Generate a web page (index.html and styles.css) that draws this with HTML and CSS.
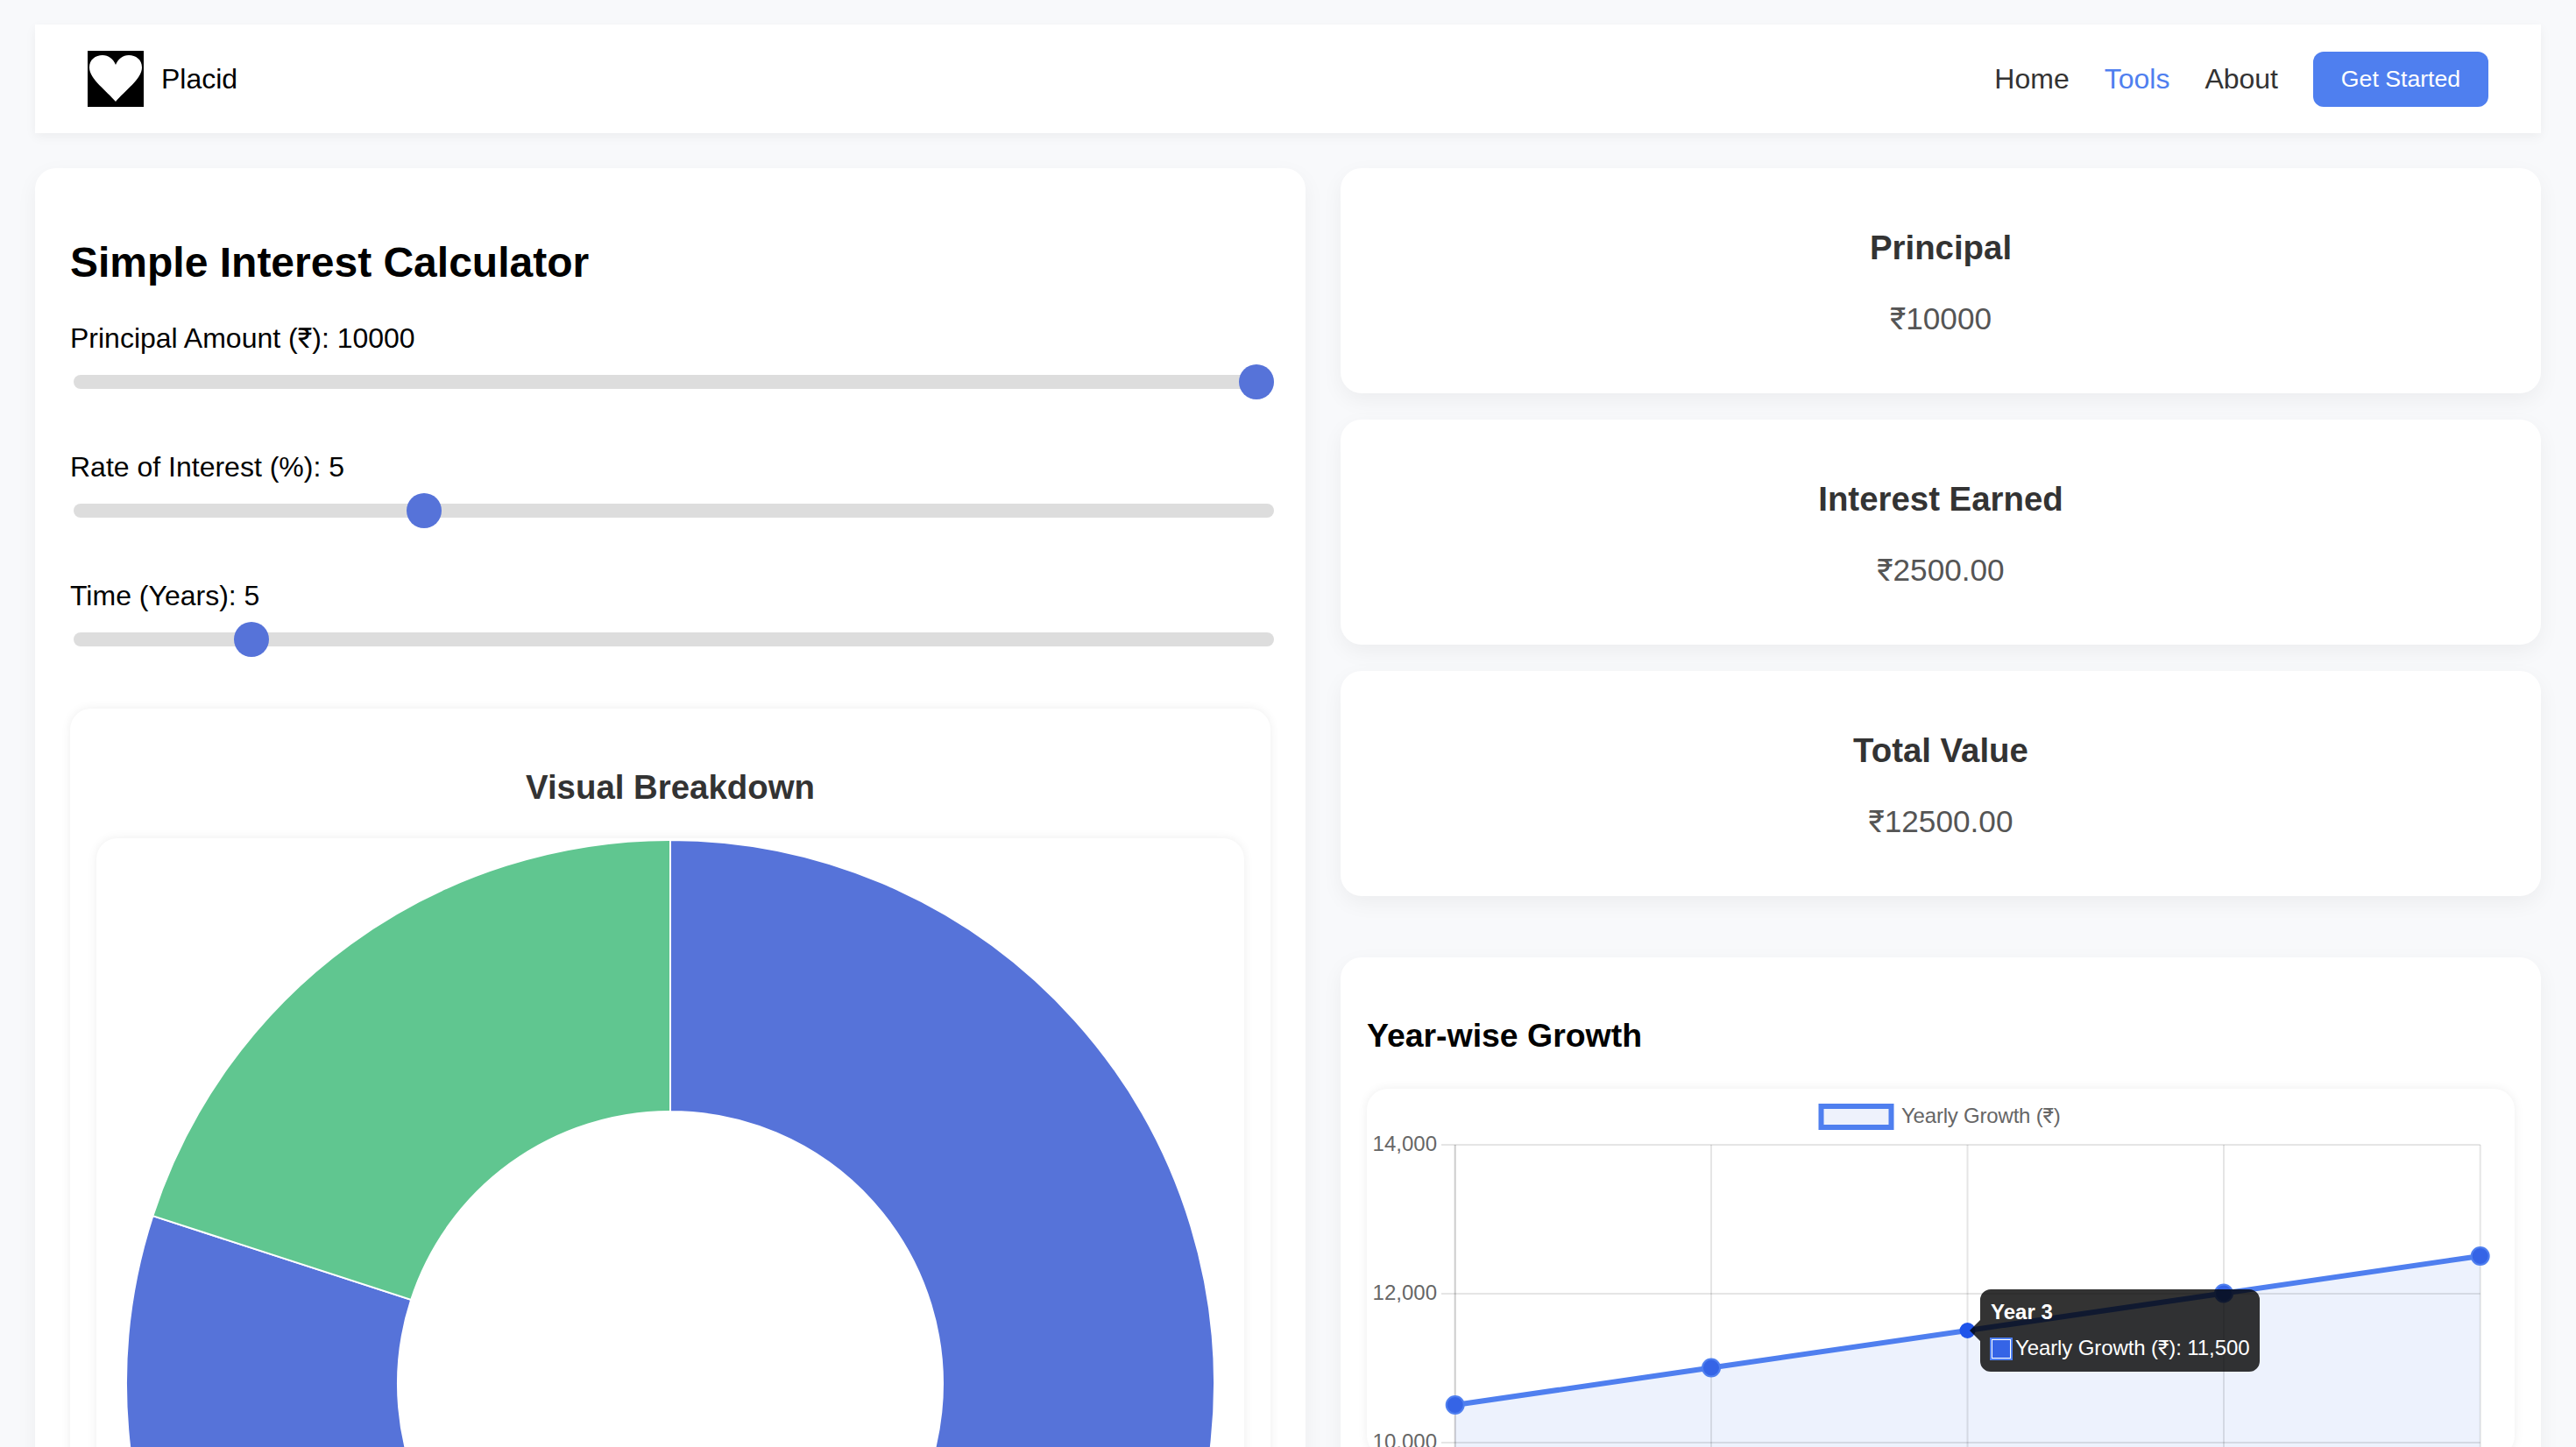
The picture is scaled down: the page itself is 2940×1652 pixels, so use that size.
FILE: index.html
```html
<!DOCTYPE html>
<html lang="en">
<head>
<meta charset="utf-8">
<title>Placid - Simple Interest Calculator</title>
<link rel="stylesheet" href="styles.css">
</head>
<body>
<header class="navbar">
  <div class="brand">
    <svg class="logo" viewBox="0 0 64 64" aria-hidden="true"><rect width="64" height="64" fill="#000"/><path fill="#fff" d="M32 58C22 46 2 32 2 19C2 10 9 5 17 5C24 5 29 9 32 16C35 9 40 5 47 5C55 5 62 10 62 19C62 32 42 46 32 58Z"/></svg>
    <span class="brand-name">Placid</span>
  </div>
  <nav class="nav-links">
    <a class="nav-link">Home</a>
    <a class="nav-link active">Tools</a>
    <a class="nav-link">About</a>
    <button class="cta">Get Started</button>
  </nav>
</header>
<main class="layout">
  <section class="card calc">
    <h1 class="calc-title">Simple Interest Calculator</h1>
    <div class="field">
      <label class="field-label">Principal Amount (<span class="rupee">₹</span>): 10000</label>
      <input class="slider" type="range" min="1000" max="10000" value="10000">
    </div>
    <div class="field">
      <label class="field-label">Rate of Interest (%): 5</label>
      <input class="slider" type="range" min="1" max="15" value="5">
    </div>
    <div class="field">
      <label class="field-label">Time (Years): 5</label>
      <input class="slider" type="range" min="1" max="30" value="5">
    </div>
    <div class="breakdown">
      <h3 class="breakdown-title">Visual Breakdown</h3>
      <div class="chart-box donut-box">
        <svg class="donut" width="1242" height="1242" viewBox="0 0 1242 1242" aria-hidden="true">
          <path fill="#5673d9" stroke="#fff" stroke-width="2" d="M621 0A621 621 0 1 1 30.4 429.1L325.2 524.9A311 311 0 1 0 621 310Z"/>
          <path fill="#60c690" stroke="#fff" stroke-width="2" d="M30.4 429.1A621 621 0 0 1 621 0V310A311 311 0 0 0 325.2 524.9Z"/>
        </svg>
      </div>
    </div>
  </section>
  <aside class="side">
    <div class="card stat"><h3 class="stat-title">Principal</h3><p class="stat-value"><span class="rupee">₹</span>10000</p></div>
    <div class="card stat"><h3 class="stat-title">Interest Earned</h3><p class="stat-value"><span class="rupee">₹</span>2500.00</p></div>
    <div class="card stat"><h3 class="stat-title">Total Value</h3><p class="stat-value"><span class="rupee">₹</span>12500.00</p></div>
    <section class="card growth">
      <h2 class="growth-title">Year-wise Growth</h2>
      <div class="chart-box line-box">
        <svg class="line-chart" width="1310" height="410" viewBox="1560 1242 1310 410">
          <rect class="legend-box" x="2078.5" y="1262" width="80" height="24"/>
          <text class="tick legend-text" x="2170" y="1281">Yearly Growth (<tspan class="rupee">₹</tspan>)</text>
          <path class="area" d="M1660.7 1603L1953 1560.5L2245.5 1518L2538 1475.5L2830.7 1433V1682H1660.7Z"/>
          <g class="grid">
            <path d="M1645 1306H2830.7M1645 1476H2830.7M1645 1646H2830.7"/>
            <path d="M1953 1306V1682M2245.5 1306V1682M2538 1306V1682M2830.7 1306V1682"/>
          </g>
          <path class="axis" d="M1660.7 1306V1682"/>
          <text class="tick end" x="1640" y="1313">14,000</text>
          <text class="tick end" x="1640" y="1483">12,000</text>
          <text class="tick end" x="1640" y="1653">10,000</text>
          <path class="line" d="M1660.7 1603L1953 1560.5L2245.5 1518L2538 1475.5L2830.7 1433"/>
          <g class="points">
            <circle cx="1660.7" cy="1603" r="10"/><circle cx="1953" cy="1560.5" r="10"/><circle cx="2538" cy="1475.5" r="10"/><circle cx="2830.7" cy="1433" r="10"/>
          </g>
          <circle class="point-hover" cx="2245.5" cy="1518" r="9"/>
          <path class="tip" d="M2272 1471H2567A12 12 0 0 1 2579 1483V1553A12 12 0 0 1 2567 1565H2272A12 12 0 0 1 2260 1553V1530L2248 1518L2260 1506V1483A12 12 0 0 1 2272 1471Z"/>
          <text class="tip-title" x="2272" y="1505">Year 3</text>
          <rect class="swatch" x="2272" y="1527" width="24" height="24"/>
          <rect class="swatch-inner" x="2274" y="1529" width="20" height="20"/>
          <text class="tip-text" x="2300" y="1546">Yearly Growth (<tspan class="rupee">₹</tspan>): 11,500</text>
        </svg>
      </div>
    </section>
  </aside>
</main>
</body>
</html>
```
FILE: styles.css
```css
* { box-sizing: border-box; }
html, body { margin: 0; height: 1652px; overflow: hidden; }
body {
  padding: 28px 40px 0;
  background: #f8f9fb;
  font-family: "Liberation Sans", Arial, sans-serif;
  color: #000;
}
.rupee { font-family: Roboto, "Liberation Sans", sans-serif; }
.navbar {
  height: 124px;
  display: flex;
  align-items: center;
  justify-content: space-between;
  padding: 0 60px;
  background: #fff;
  box-shadow: 0 4px 12px rgba(0,0,0,.05);
}
.brand { display: flex; align-items: center; gap: 20px; }
.logo { width: 64px; height: 64px; display: block; }
.brand-name { font-size: 32px; }
.nav-links { display: flex; align-items: center; gap: 40px; }
.nav-link { font-size: 32px; color: #333; }
.nav-link.active { color: #4f7fef; }
.cta {
  width: 200px;
  height: 63px;
  border: 0;
  border-radius: 12px;
  background: #4f7fef;
  color: #fff;
  font: 26.67px "Liberation Sans", Arial, sans-serif;
}
.layout {
  margin-top: 40px;
  display: grid;
  grid-template-columns: 1450px 1370px;
  gap: 40px;
  align-items: start;
}
.card {
  background: #fff;
  border-radius: 24px;
  box-shadow: 0 8px 24px rgba(0,0,0,.05);
}
.calc { padding: 80px 40px 40px; }
.calc-title { margin: 0 0 41px; font-size: 48px; line-height: 55px; font-weight: 700; }
.field { height: 147px; }
.field-label { display: block; font-size: 32px; line-height: 37px; }
.slider {
  display: block;
  width: 1370px;
  height: 40px;
  margin: 11px 4px 0;
  -webkit-appearance: none;
  appearance: none;
  background: transparent;
}
.slider::-webkit-slider-runnable-track {
  height: 16px;
  border-radius: 8px;
  background: #ddd;
}
.slider::-webkit-slider-thumb {
  -webkit-appearance: none;
  width: 40px;
  height: 40px;
  margin-top: -12px;
  border-radius: 50%;
  background: #5673d9;
}
.breakdown {
  height: 900px;
  padding: 67px 30px 0;
  border-radius: 24px;
  background: #fff;
  box-shadow: 0 0 12px rgba(0,0,0,.07);
}
.breakdown-title { margin: 0 0 35px; text-align: center; font-size: 38.4px; line-height: 46px; color: #333; }
.chart-box {
  background: #fff;
  border-radius: 24px;
  box-shadow: 0 0 12px rgba(0,0,0,.07);
}
.donut-box { height: 800px; padding: 2px 0 0 34px; }
.donut { display: block; }
.side { display: flex; flex-direction: column; gap: 30px; }
.stat { height: 257px; text-align: center; padding-top: 68px; }
.stat-title { margin: 0 0 37px; font-size: 38.4px; line-height: 46px; color: #333; font-weight: 700; }
.stat-value { margin: 0; font-size: 35.2px; line-height: 41px; color: #555; }
.growth { margin-top: 40px; height: 700px; padding: 66px 30px 0; }
.growth-title { margin: 0 0 38px; font-size: 37.44px; line-height: 46px; }
.line-box { height: 420px; }
.line-chart { display: block; }
.legend-box { fill: #eef2fc; stroke: #4f7fef; stroke-width: 6; }
.tick { font-size: 24px; fill: #666; }
.legend-text { letter-spacing: -.2px; }
.end { text-anchor: end; }
.area { fill: rgba(79,127,239,.1); }
.grid path { fill: none; stroke: rgba(0,0,0,.1); stroke-width: 2; }
.axis { fill: none; stroke: rgba(0,0,0,.2); stroke-width: 2; }
.line { fill: none; stroke: #4f7fef; stroke-width: 6; }
.points circle { fill: #3564e6; stroke: #4f7fef; stroke-width: 2; }
.point-hover { fill: #1f54ea; }
.tip { fill: rgba(0,0,0,.8); }
.tip-title { font-size: 24px; font-weight: 700; fill: #fff; }
.tip-text { font-size: 24px; fill: #fff; letter-spacing: -.1px; }
.swatch { fill: #fff; stroke: #4f7fef; stroke-width: 2; }
.swatch-inner { fill: #3564e6; }
```
